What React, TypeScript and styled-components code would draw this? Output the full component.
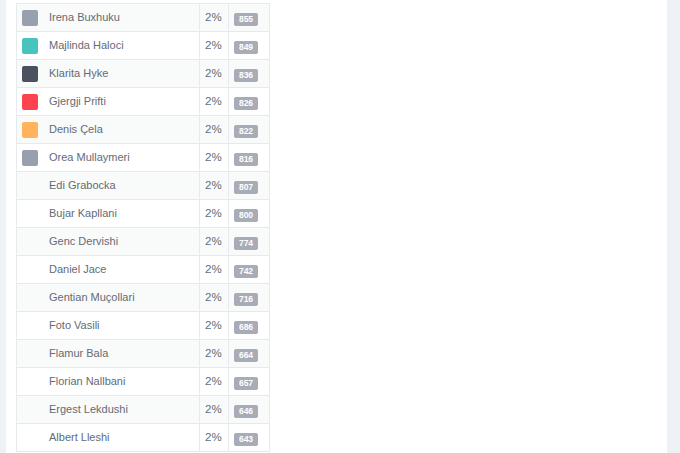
import React from 'react'
import styled, { createGlobalStyle } from 'styled-components'

const GlobalStyle = createGlobalStyle`
  html, body {
    margin: 0;
    padding: 0;
    background: #eef1f6;
    font-family: Arial, "Liberation Sans", Helvetica, sans-serif;
    color: #646b75;
  }
`

const Page = styled.div`
  min-height: 100vh;
  padding: 0 13px 0 6px;
  box-sizing: border-box;
  display: flex;
`

const Panel = styled.div`
  flex: 1;
  background: #ffffff;
  padding: 3px 10px 0;
  min-height: 100vh;
  box-sizing: border-box;
`

const Table = styled.div`
  width: 254px;
  display: flex;
  flex-direction: column;
  border-bottom: 1px solid #e7eaec;
`

const Row = styled.div<{ $striped: boolean }>`
  display: grid;
  grid-template-columns: 183px 29px 42px;
  height: 28px;
  box-sizing: border-box;
  border-top: 1px solid #e7eaec;
  border-right: 1px solid #e7eaec;
  background: ${({ $striped }) => ($striped ? '#f9fafa' : '#ffffff')};
`

const Cell = styled.div`
  display: flex;
  align-items: center;
  border-left: 1px solid #e7eaec;
  padding-left: 5px;
  font-size: 11px;
  min-width: 0;
`

const Swatch = styled.span<{ $color?: string }>`
  width: 16px;
  height: 16px;
  border-radius: 2px;
  margin-right: 11px;
  flex-shrink: 0;
  background: ${({ $color }) => $color || 'transparent'};
`

const Name = styled.span`
  white-space: nowrap;
  margin-top: -1px;
`

const Percent = styled.span`
  font-size: 11.5px;
  margin-top: -2px;
`

const Badge = styled.span`
  display: inline-flex;
  align-items: center;
  justify-content: center;
  width: 24px;
  height: 13px;
  margin-top: 3px;
  border-radius: 2px;
  background: #a8acb7;
  color: #ffffff;
  font-size: 8.5px;
  font-weight: bold;
`

const people = [
  { name: 'Irena Buxhuku', count: 855, color: '#98a0b0' },
  { name: 'Majlinda Haloci', count: 849, color: '#48c3bd' },
  { name: 'Klarita Hyke', count: 836, color: '#4b515e' },
  { name: 'Gjergji Prifti', count: 826, color: '#fb444d' },
  { name: 'Denis Çela', count: 822, color: '#ffb35b' },
  { name: 'Orea Mullaymeri', count: 816, color: '#98a0b0' },
  { name: 'Edi Grabocka', count: 807 },
  { name: 'Bujar Kapllani', count: 800 },
  { name: 'Genc Dervishi', count: 774 },
  { name: 'Daniel Jace', count: 742 },
  { name: 'Gentian Muçollari', count: 716 },
  { name: 'Foto Vasili', count: 686 },
  { name: 'Flamur Bala', count: 664 },
  { name: 'Florian Nallbani', count: 657 },
  { name: 'Ergest Lekdushi', count: 646 },
  { name: 'Albert Lleshi', count: 643 },
]

const App = () => (
  <>
    <GlobalStyle />
    <Page>
      <Panel>
        <Table>
          {people.map((p, i) => (
            <Row key={p.name} $striped={i % 2 === 0}>
              <Cell>
                <Swatch $color={p.color} />
                <Name>{p.name}</Name>
              </Cell>
              <Cell>
                <Percent>2%</Percent>
              </Cell>
              <Cell>
                <Badge>{p.count}</Badge>
              </Cell>
            </Row>
          ))}
        </Table>
      </Panel>
    </Page>
  </>
)

export default App
